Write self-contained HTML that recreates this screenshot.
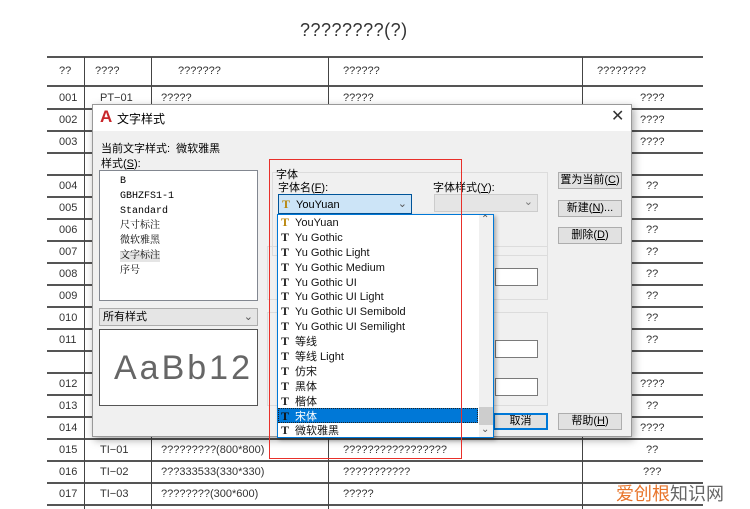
<!DOCTYPE html>
<html><head><meta charset="utf-8"><style>
*{margin:0;padding:0;box-sizing:border-box}
body{width:750px;height:509px;background:#fff;position:relative;overflow:hidden;font-family:"Liberation Sans","Noto Sans CJK SC",sans-serif;font-size:11px;color:#222}
.a{position:absolute;white-space:nowrap}
.h{position:absolute;height:2px;background:#555;left:47px;width:656px}
.v{position:absolute;width:1px;background:#444}
.t{position:absolute;font-size:11px;color:#333}
.btn{position:absolute;background:#e1e1e1;border:1px solid #adadad;font-size:11px;text-align:center;line-height:15px;color:#000}
.gb{position:absolute;border:1px solid #dcdcdc}
.tb{position:absolute;background:#fff;border:1px solid #7a7a7a}
.ic{display:inline-block;width:12px;font-family:"Liberation Serif",serif;font-weight:bold;font-size:12px;color:#222;margin-right:2px}
.li div{height:14.9px;line-height:14.9px;overflow:hidden}
</style></head><body>
<div class="a" style="left:300px;top:20px;font-size:18px;color:#333;letter-spacing:0.5px">????????(?)</div>
<div class="h" style="top:56px"></div>
<div class="h" style="top:85px"></div>
<div class="h" style="top:108px"></div><div class="h" style="top:130px"></div><div class="h" style="top:152px"></div><div class="h" style="top:174px"></div><div class="h" style="top:196px"></div><div class="h" style="top:218px"></div><div class="h" style="top:240px"></div><div class="h" style="top:262px"></div><div class="h" style="top:284px"></div><div class="h" style="top:306px"></div><div class="h" style="top:328px"></div><div class="h" style="top:350px"></div><div class="h" style="top:372px"></div><div class="h" style="top:394px"></div><div class="h" style="top:416px"></div><div class="h" style="top:438px"></div><div class="h" style="top:460px"></div><div class="h" style="top:482px"></div><div class="h" style="top:504px"></div>
<div class="v" style="left:84px;top:57px;height:452px"></div>
<div class="v" style="left:151px;top:57px;height:452px"></div>
<div class="v" style="left:328px;top:57px;height:452px"></div>
<div class="v" style="left:582px;top:57px;height:452px"></div>
<div class="t" style="left:59px;top:65px">??</div>
<div class="t" style="left:95px;top:65px">????</div>
<div class="t" style="left:178px;top:65px">???????</div>
<div class="t" style="left:343px;top:65px">??????</div>
<div class="t" style="left:597px;top:65px">????????</div>
<div class="t" style="left:59px;top:92px">001</div><div class="t" style="left:100px;top:92px">PT−01</div><div class="t" style="left:161px;top:92px">?????</div><div class="t" style="left:343px;top:92px">?????</div><div class="t" style="left:640px;top:92px">????</div>
<div class="t" style="left:59px;top:114px">002</div><div class="t" style="left:640px;top:114px">????</div>
<div class="t" style="left:59px;top:136px">003</div><div class="t" style="left:640px;top:136px">????</div>
<div class="t" style="left:59px;top:180px">004</div><div class="t" style="left:646px;top:180px">??</div>
<div class="t" style="left:59px;top:202px">005</div><div class="t" style="left:646px;top:202px">??</div>
<div class="t" style="left:59px;top:224px">006</div><div class="t" style="left:646px;top:224px">??</div>
<div class="t" style="left:59px;top:246px">007</div><div class="t" style="left:646px;top:246px">??</div>
<div class="t" style="left:59px;top:268px">008</div><div class="t" style="left:646px;top:268px">??</div>
<div class="t" style="left:59px;top:290px">009</div><div class="t" style="left:646px;top:290px">??</div>
<div class="t" style="left:59px;top:312px">010</div><div class="t" style="left:646px;top:312px">??</div>
<div class="t" style="left:59px;top:334px">011</div><div class="t" style="left:646px;top:334px">??</div>
<div class="t" style="left:59px;top:378px">012</div><div class="t" style="left:640px;top:378px">????</div>
<div class="t" style="left:59px;top:400px">013</div><div class="t" style="left:646px;top:400px">??</div>
<div class="t" style="left:59px;top:422px">014</div><div class="t" style="left:640px;top:422px">????</div>
<div class="t" style="left:59px;top:444px">015</div><div class="t" style="left:100px;top:444px">TI−01</div><div class="t" style="left:161px;top:444px">?????????(800*800)</div><div class="t" style="left:343px;top:444px">?????????????????</div><div class="t" style="left:646px;top:444px">??</div>
<div class="t" style="left:59px;top:466px">016</div><div class="t" style="left:100px;top:466px">TI−02</div><div class="t" style="left:161px;top:466px">???333533(330*330)</div><div class="t" style="left:343px;top:466px">???????????</div><div class="t" style="left:643px;top:466px">???</div>
<div class="t" style="left:59px;top:488px">017</div><div class="t" style="left:100px;top:488px">TI−03</div><div class="t" style="left:161px;top:488px">????????(300*600)</div><div class="t" style="left:343px;top:488px">?????</div>
<div class="a" style="left:616px;top:480px;font-size:18px;color:#666"><span style="color:#e8742a">爱创根</span>知识网</div>

<!-- dialog -->
<div class="a" style="left:92px;top:104px;width:540px;height:333px;background:#f0f0f0;border:1px solid #999;box-shadow:2px 3px 8px rgba(0,0,0,.35)"></div>
<div class="a" style="left:93px;top:105px;width:538px;height:26px;background:#fff"></div>
<div class="a" style="left:100px;top:107px;font-size:17px;font-weight:bold;color:#c8262a;font-family:'Liberation Sans',sans-serif">A</div>
<div class="a" style="left:117px;top:110px;font-size:12px;color:#000">文字样式</div>
<div class="a" style="left:611px;top:106px;font-size:16px;color:#333">✕</div>
<div class="a" style="left:101px;top:140px;font-size:11px;color:#000">当前文字样式:&nbsp; 微软雅黑</div>
<div class="a" style="left:101px;top:155px;font-size:11px;color:#000">样式(<u>S</u>):</div>
<div class="tb" style="left:99px;top:170px;width:159px;height:131px;border-color:#828790"></div>
<div class="a" style="left:120px;top:174px;font-family:'Liberation Mono','Noto Serif CJK SC',monospace;font-size:10px;color:#000;line-height:15px">B<br>GBHZFS1-1<br>Standard<br>尺寸标注<br>微软雅黑<br><span style="background:#e5e5e5">文字标注</span><br>序号</div>
<div class="a" style="left:99px;top:308px;width:159px;height:18px;background:#e5e5e5;border:1px solid #acacac;font-size:11px;padding-left:3px;line-height:16px;color:#000">所有样式<span style="position:absolute;right:4px;color:#555">⌄</span></div>
<div class="tb" style="left:99px;top:329px;width:159px;height:77px;border-color:#555"></div>
<div class="a" style="left:114px;top:349px;font-size:34px;color:#666;font-family:'Liberation Sans',sans-serif;letter-spacing:3px">AaBb12</div>

<div class="gb" style="left:272px;top:172px;width:276px;height:84px"></div>
<div class="a" style="left:276px;top:166px;font-size:11px;color:#000">字体</div>
<div class="a" style="left:278px;top:179px;font-size:11px;color:#000">字体名(<u>F</u>):</div>
<div class="a" style="left:433px;top:179px;font-size:11px;color:#000">字体样式(<u>Y</u>):</div>
<div class="a" style="left:278px;top:194px;width:134px;height:20px;background:#cce4f7;border:1px solid #005499;font-size:11px;line-height:18px;padding-left:3px;color:#000"><span class="ic" style="color:#b8860b">T</span>YouYuan<span style="position:absolute;right:4px;color:#555">⌄</span></div>
<div class="a" style="left:434px;top:194px;width:104px;height:18px;background:#e5e5e5;border:1px solid #ccc"><span style="position:absolute;right:4px;color:#777">⌄</span></div>
<div class="gb" style="left:267px;top:246px;width:281px;height:54px"></div>
<div class="gb" style="left:267px;top:312px;width:281px;height:94px"></div>
<div class="tb" style="left:495px;top:268px;width:43px;height:18px"></div>
<div class="tb" style="left:495px;top:340px;width:43px;height:18px"></div>
<div class="tb" style="left:495px;top:378px;width:43px;height:18px"></div>
<div class="btn" style="left:558px;top:172px;width:64px;height:17px">置为当前(<u>C</u>)</div>
<div class="btn" style="left:558px;top:200px;width:64px;height:17px">新建(<u>N</u>)...</div>
<div class="btn" style="left:558px;top:227px;width:64px;height:17px">删除(<u>D</u>)</div>
<div class="btn" style="left:558px;top:413px;width:64px;height:17px">帮助(<u>H</u>)</div>
<div class="btn" style="left:493px;top:413px;width:55px;height:17px;border:2px solid #0078d7;line-height:13px">取消</div>

<!-- dropdown -->
<div class="a" style="left:277px;top:214px;width:217px;height:224px;background:#fff;border:1px solid #0078d7;box-shadow:2px 2px 4px rgba(0,0,0,.3)"></div>
<div class="a" style="left:479px;top:215px;width:14px;height:222px;background:#f0f0f0"></div>
<div class="a" style="left:479px;top:407px;width:14px;height:18px;background:#cdcdcd"></div>
<div class="a" style="left:481px;top:214px;font-size:10px;color:#555">⌃</div>
<div class="a" style="left:481px;top:424px;font-size:10px;color:#555">⌄</div>
<div class="a" style="left:278px;top:408px;width:200px;height:15px;background:#0078d7;border:1px dotted #222"></div>
<div class="a li" style="left:281px;top:215px;width:196px;height:222px;overflow:hidden;font-size:11px;color:#111">
<div><span class="ic" style="color:#b8860b">T</span>YouYuan</div>
<div><span class="ic">T</span>Yu Gothic</div>
<div><span class="ic">T</span>Yu Gothic Light</div>
<div><span class="ic">T</span>Yu Gothic Medium</div>
<div><span class="ic">T</span>Yu Gothic UI</div>
<div><span class="ic">T</span>Yu Gothic UI Light</div>
<div><span class="ic">T</span>Yu Gothic UI Semibold</div>
<div><span class="ic">T</span>Yu Gothic UI Semilight</div>
<div><span class="ic">T</span>等线</div>
<div><span class="ic">T</span>等线 Light</div>
<div><span class="ic">T</span>仿宋</div>
<div><span class="ic">T</span>黑体</div>
<div><span class="ic">T</span>楷体</div>
<div style="color:#fff"><span class="ic" style="color:#111">T</span>宋体</div>
<div><span class="ic">T</span>微软雅黑</div>
</div>
<div class="a" style="left:269px;top:159px;width:193px;height:300px;border:1px solid #e8302a"></div>
</body></html>
